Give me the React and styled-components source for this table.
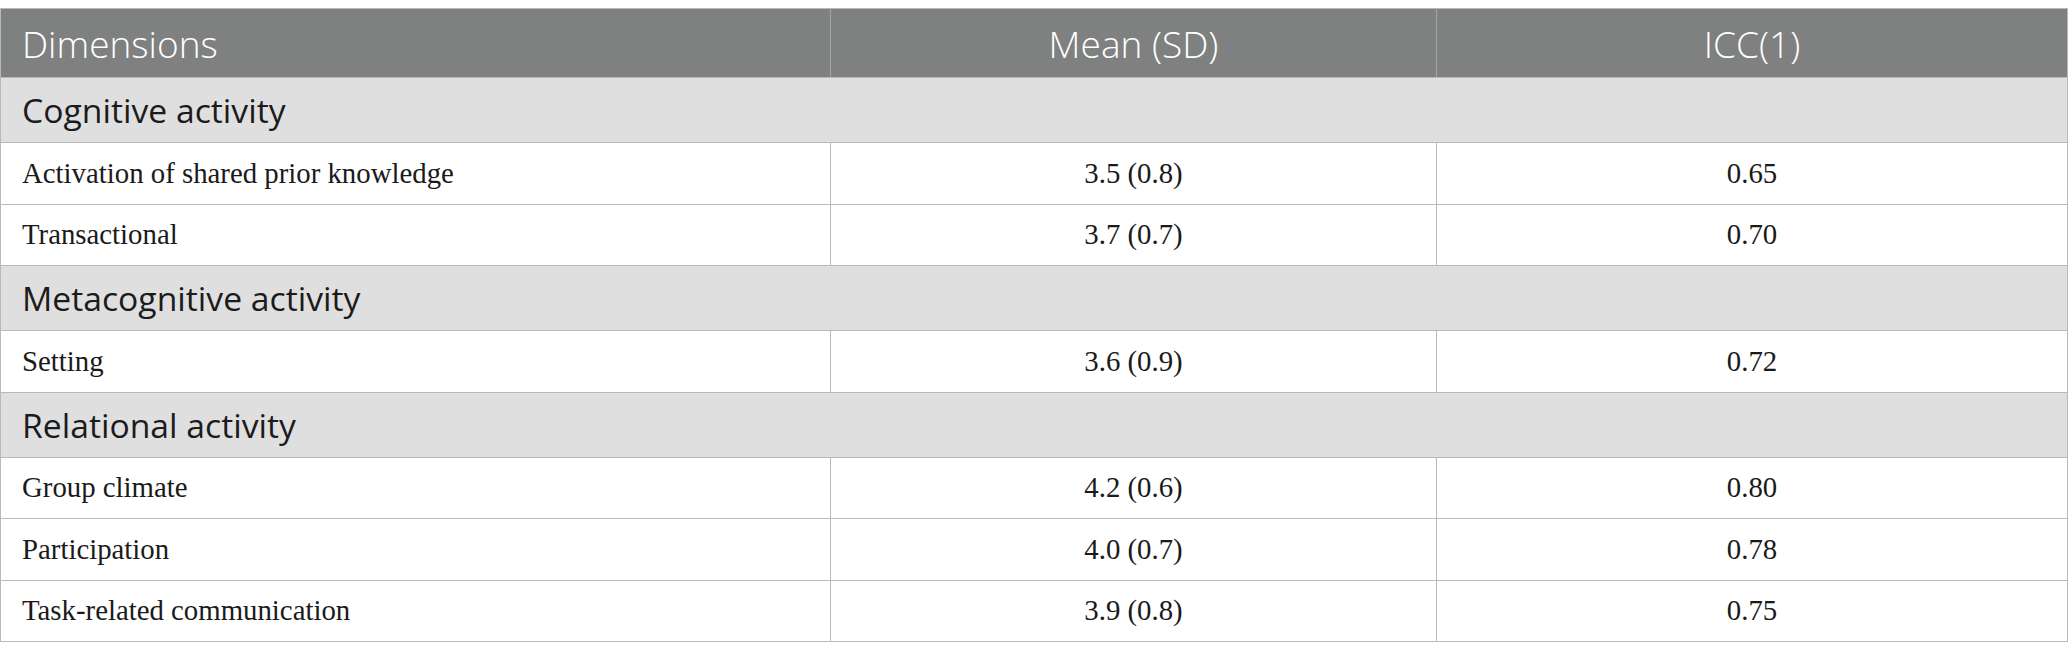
import React from "react";
import styled, { createGlobalStyle } from "styled-components";

const Global = createGlobalStyle`
  html, body { margin: 0; padding: 0; background: #ffffff; }
  body { padding-top: 8px; }
`;

const Table = styled.table`
  width: 2067px;
  border-collapse: collapse;
  table-layout: fixed;
  border: 1px solid #b9b9b9;
`;

const HeadCell = styled.th`
  height: 69px;
  box-sizing: border-box;
  padding: 0 21px;
  background: #7f8180;
  color: #ffffff;
  font-family: "Open Sans", "Noto Sans", sans-serif;
  font-weight: 300;
  font-size: 37px;
  text-align: ${(p) => p.$align || "center"};
  border-left: 1px solid #a3a3a3;
  border-bottom: 1px solid #b9b9b9;
  &:first-child { border-left: none; }
`;

const CategoryCell = styled.td`
  height: 65px;
  box-sizing: border-box;
  padding: 0 21px;
  background: #e0dfe0;
  color: #1b1b1b;
  font-family: "Open Sans", "Noto Sans", sans-serif;
  font-size: 33.7px;
  border-bottom: 1px solid #b9b9b9;
  text-align: left;
`;

const DataCell = styled.td`
  height: 61.5px;
  box-sizing: border-box;
  padding: 0 21px;
  background: #ffffff;
  color: #1a1a1a;
  font-family: "Liberation Serif", "Times New Roman", serif;
  font-size: 28.8px;
  text-align: ${(p) => p.$align || "center"};
  border-bottom: 1px solid #b9b9b9;
  border-left: 1px solid #b9b9b9;
  &:first-child { border-left: none; }
`;

const groups = [
  {
    title: "Cognitive activity",
    rows: [
      ["Activation of shared prior knowledge", "3.5 (0.8)", "0.65"],
      ["Transactional", "3.7 (0.7)", "0.70"],
    ],
  },
  {
    title: "Metacognitive activity",
    rows: [["Setting", "3.6 (0.9)", "0.72"]],
  },
  {
    title: "Relational activity",
    rows: [
      ["Group climate", "4.2 (0.6)", "0.80"],
      ["Participation", "4.0 (0.7)", "0.78"],
      ["Task-related communication", "3.9 (0.8)", "0.75"],
    ],
  },
];

export default function App() {
  return (
    <>
      <Global />
      <Table>
        <colgroup>
          <col style={{ width: "830px" }} />
          <col style={{ width: "606px" }} />
          <col style={{ width: "631px" }} />
        </colgroup>
        <thead>
          <tr>
            <HeadCell $align="left">Dimensions</HeadCell>
            <HeadCell>Mean (SD)</HeadCell>
            <HeadCell>ICC(1)</HeadCell>
          </tr>
        </thead>
        <tbody>
          {groups.map((g) => (
            <React.Fragment key={g.title}>
              <tr>
                <CategoryCell colSpan={3}>{g.title}</CategoryCell>
              </tr>
              {g.rows.map((r) => (
                <tr key={r[0]}>
                  <DataCell $align="left">{r[0]}</DataCell>
                  <DataCell>{r[1]}</DataCell>
                  <DataCell>{r[2]}</DataCell>
                </tr>
              ))}
            </React.Fragment>
          ))}
        </tbody>
      </Table>
    </>
  );
}
